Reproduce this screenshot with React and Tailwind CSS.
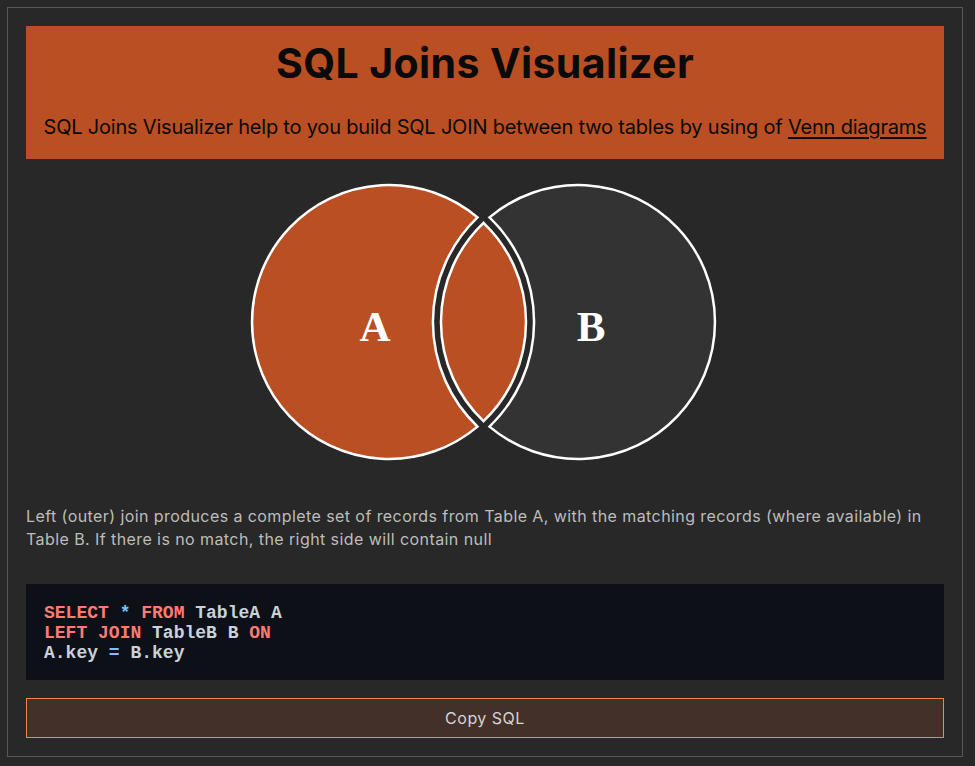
import { useState } from 'react';

const ORANGE = '#b94f22';

const sqlLines = [
  [
    { t: 'SELECT', c: 'kw' },
    { t: ' ' },
    { t: '*', c: 'op' },
    { t: ' ' },
    { t: 'FROM', c: 'kw' },
    { t: ' TableA A' },
  ],
  [
    { t: 'LEFT', c: 'kw' },
    { t: ' ' },
    { t: 'JOIN', c: 'kw' },
    { t: ' TableB B ' },
    { t: 'ON', c: 'kw' },
  ],
  [{ t: 'A.key ' }, { t: '=', c: 'op' }, { t: ' B.key' }],
];

const tokenColors = {
  kw: 'text-[#ff7b72]',
  op: 'text-[#79c0ff]',
};

const Venn = () => (
  <svg
    className="block w-full h-[300px]"
    viewBox="26 172 918 300"
    xmlns="http://www.w3.org/2000/svg"
  >
    {/* A only */}
    <path
      d="M 477.5 217.4 A 137 137 0 1 0 477.5 426.6 A 145 145 0 0 1 477.5 217.4 Z"
      fill={ORANGE}
      stroke="#ffffff"
      strokeWidth="2.5"
    />
    {/* B only */}
    <path
      d="M 489.5 217.4 A 137 137 0 1 1 489.5 426.6 A 145 145 0 0 0 489.5 217.4 Z"
      fill="#333333"
      stroke="#ffffff"
      strokeWidth="2.5"
    />
    {/* A and B */}
    <path
      d="M 483.5 222.8 A 137 137 0 0 1 483.5 421.2 A 137 137 0 0 1 483.5 222.8 Z"
      fill={ORANGE}
      stroke="#ffffff"
      strokeWidth="2.5"
    />
    <text
      x="375"
      y="341"
      textAnchor="middle"
      fill="#ffffff"
      fontSize="43"
      fontWeight="700"
      fontFamily="'Liberation Serif', serif"
    >
      A
    </text>
    <text
      x="591"
      y="341"
      textAnchor="middle"
      fill="#ffffff"
      fontSize="43"
      fontWeight="700"
      fontFamily="'Liberation Serif', serif"
    >
      B
    </text>
  </svg>
);

export default function App() {
  const [copied, setCopied] = useState(false);

  return (
    <div className="min-h-[766px] bg-[#282828] pt-[7px] font-['Inter',sans-serif]">
      <div className="ml-[7px] w-[956px] h-[750px] border border-[#575757] p-[18px]">
        {/* Header */}
        <div className="bg-[#b94f22] pt-[13px] pb-[18px] text-center text-[#0a0a0a]">
          <h1 className="text-[41px] leading-[48px] font-bold tracking-[0.4px]">SQL Joins Visualizer</h1>
          <p className="mt-[26px] text-[20px] leading-[28px] tracking-[-0.2px]">
            SQL Joins Visualizer help to you build SQL JOIN between two tables by using of{' '}
            <span className="underline underline-offset-[3px]">Venn diagrams</span>
          </p>
        </div>

        <div className="mt-[13px]">
          <Venn />
        </div>

        <p className="mt-[33px] text-[16px] leading-[23px] tracking-[0.42px] text-[#bdbdbd]">
          Left (outer) join produces a complete set of records from Table A, with the matching records (where available) in
          Table B. If there is no match, the right side will contain null
        </p>

        <pre className="mt-[33px] bg-[#0d1117] pt-[19px] pb-[17px] px-[18px] font-['Liberation_Mono',monospace] text-[18px] leading-5 font-bold text-[#c9d1d9]">
          {sqlLines.map((line, i) => (
            <div key={i}>
              {line.map((tok, j) => (
                <span key={j} className={tok.c ? tokenColors[tok.c] : ''}>
                  {tok.t}
                </span>
              ))}
            </div>
          ))}
        </pre>

        <button
          onClick={() => setCopied(true)}
          className="mt-[18px] w-full h-10 bg-[#433029] border border-[#ff7f50] text-[16px] tracking-[0.5px] text-[#d4d4d4]"
        >
          {copied ? 'Copied!' : 'Copy SQL'}
        </button>
      </div>
    </div>
  );
}
